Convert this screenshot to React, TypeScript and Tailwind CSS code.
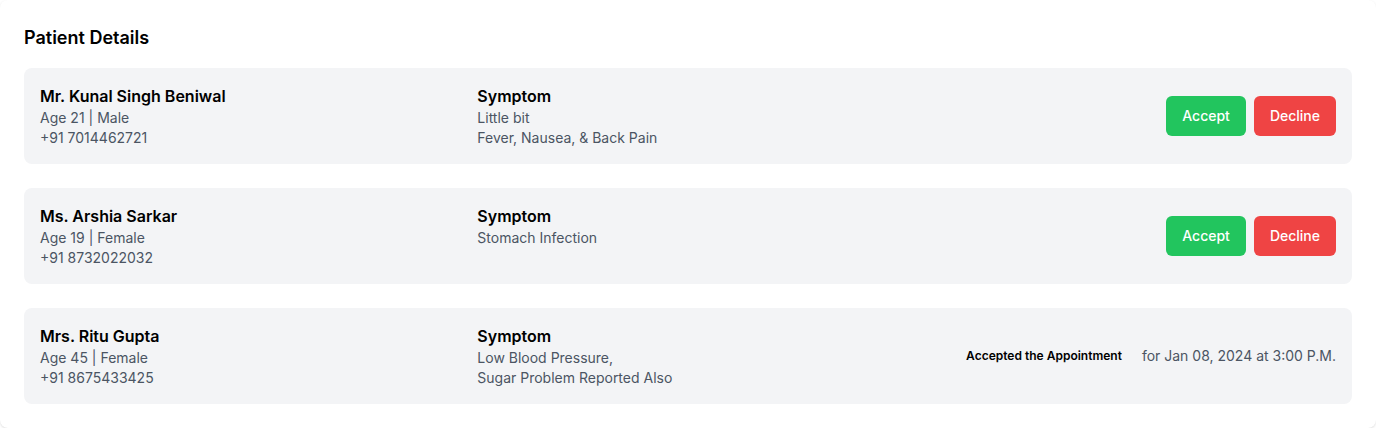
import React from 'react';

type Patient = {
  name: string;
  age: number;
  gender: string;
  phone: string;
  symptoms: string[];
  accepted?: string;
};

const patients: Patient[] = [
  {
    name: 'Mr. Kunal Singh Beniwal',
    age: 21,
    gender: 'Male',
    phone: '+91 7014462721',
    symptoms: ['Little bit', 'Fever, Nausea, & Back Pain'],
  },
  {
    name: 'Ms. Arshia Sarkar',
    age: 19,
    gender: 'Female',
    phone: '+91 8732022032',
    symptoms: ['Stomach Infection'],
  },
  {
    name: 'Mrs. Ritu Gupta',
    age: 45,
    gender: 'Female',
    phone: '+91 8675433425',
    symptoms: ['Low Blood Pressure,', 'Sugar Problem Reported Also'],
    accepted: 'for Jan 08, 2024 at 3:00 P.M.',
  },
];

const App: React.FC = () => {
  return (
    <div className="min-h-[428px] bg-white font-['Inter',_'Liberation_Sans',_sans-serif]">
      <div className="bg-white rounded-lg shadow-sm p-6">
        <h2 className="text-lg font-semibold text-black mb-4">Patient Details</h2>
        <div className="flex flex-col gap-6">
          {patients.map((p) => (
            <div key={p.phone} className="bg-[#f3f4f6] rounded-lg p-4 grid grid-cols-3 gap-4 items-center">
              {/* Patient */}
              <div className="self-start">
                <p className="text-base font-semibold text-black leading-6">{p.name}</p>
                <p className="text-sm text-[#4b5563]">Age {p.age} | {p.gender}</p>
                <p className="text-sm text-[#4b5563]">{p.phone}</p>
              </div>

              {/* Symptoms */}
              <div className="self-start">
                <p className="text-base font-semibold text-black leading-6">Symptom</p>
                {p.symptoms.map((s) => (
                  <p key={s} className="text-sm text-[#4b5563]">{s}</p>
                ))}
              </div>

              {/* Actions */}
              <div className="flex items-center justify-end gap-2">
                {p.accepted ? (
                  <>
                    <span className="text-xs font-semibold text-black">Accepted the Appointment</span>
                    <span className="text-sm text-[#4b5563] ml-3">{p.accepted}</span>
                  </>
                ) : (
                  <>
                    <button className="bg-[#22c55e] text-white text-sm font-medium px-4 py-2.5 rounded-md">Accept</button>
                    <button className="bg-[#ef4444] text-white text-sm font-medium px-4 py-2.5 rounded-md">Decline</button>
                  </>
                )}
              </div>
            </div>
          ))}
        </div>
      </div>
    </div>
  );
};

export default App;
